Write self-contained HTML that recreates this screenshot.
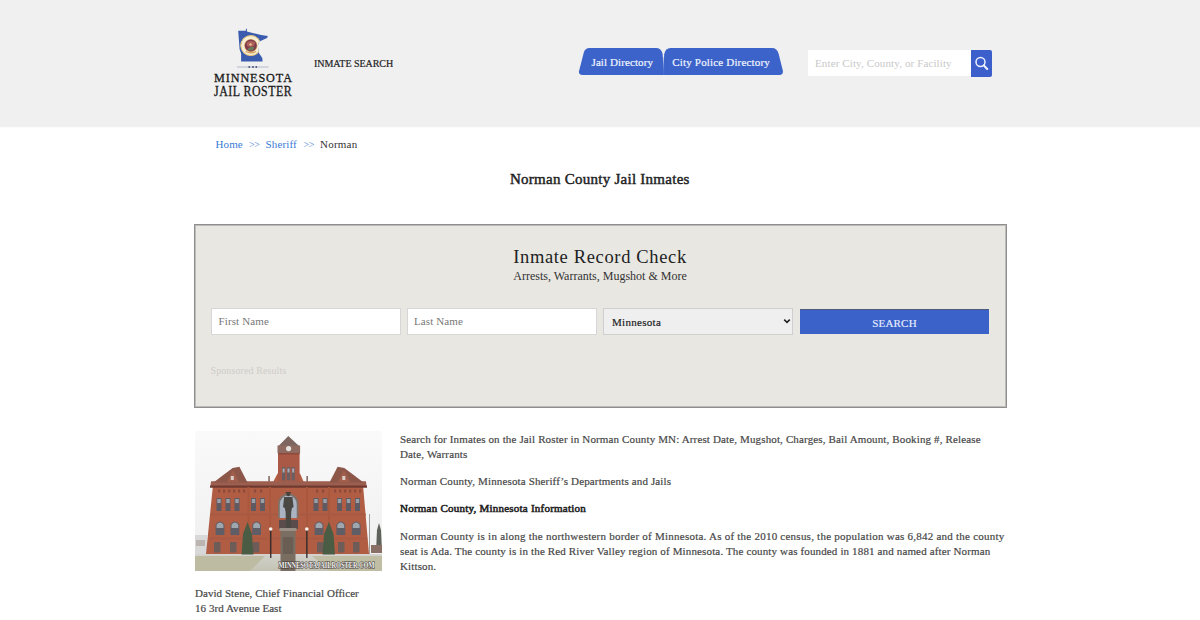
<!DOCTYPE html>
<html><head><meta charset="utf-8">
<style>
*{box-sizing:border-box;margin:0;padding:0}
html,body{width:1200px;height:620px;overflow:hidden;background:#fff;font-family:"Liberation Serif",serif;color:#444}
.a{position:absolute;white-space:nowrap}
#hdr{position:absolute;left:0;top:0;width:1200px;height:128px;background:linear-gradient(to bottom,#f0f0f0 0,#f0f0f0 125px,#ededed 125px,#ededed 126px,#f3f3f3 126px,#f3f3f3 127px,#fbfbfb 127px)}
.tab{position:absolute;top:48px;height:27px}
.tabtxt{color:#f0f4ff;font-size:11px;line-height:11px;letter-spacing:0.1px;-webkit-text-stroke:0.2px #f0f4ff}
#box{position:absolute;left:194px;top:224px;width:813px;height:184px;background:#e8e7e2;border:1px solid #8e8e8e;box-shadow:inset 0 0 0 1px #bdbcb8}
.inp{position:absolute;top:308px;height:27px;width:190px;background:#fff;border:1px solid #d6d6d6}
.ph{font-size:11px;line-height:11px;color:#777;letter-spacing:0.12px}
.p{font-size:11px;line-height:15px;color:#474747;letter-spacing:0.14px;-webkit-text-stroke:0.2px #474747}
</style></head><body>
<div id="hdr"></div>

<!-- logo -->
<svg class="a" style="left:230px;top:24px" width="46" height="46" viewBox="230 24 46 46">
  <defs>
    <clipPath id="mn"><path d="M238.2,30.7 L245.9,30.7 L245.9,28.8 L246.9,28.8 L246.9,31.4 L253.7,33.3 L261.2,35.1 L267.8,35.9 L267.1,38.1 L258.9,41.8 L257.8,46.3 L258.9,52.9 L262.3,58.1 L262.6,61.5 L241.1,61.5 L241.1,53.7 L239.6,49.2 Z"/></clipPath>
  </defs>
  <path d="M238.2,30.7 L245.9,30.7 L245.9,28.8 L246.9,28.8 L246.9,31.4 L253.7,33.3 L261.2,35.1 L267.8,35.9 L267.1,38.1 L258.9,41.8 L257.8,46.3 L258.9,52.9 L262.3,58.1 L262.6,61.5 L241.1,61.5 L241.1,53.7 L239.6,49.2 Z" fill="#3b5cae"/>
  <g clip-path="url(#mn)">
    <circle cx="250.8" cy="45.6" r="10.3" fill="#f6eed6"/>
    <circle cx="250.8" cy="45.6" r="10" fill="none" stroke="#dcb862" stroke-width="0.9"/>
    <circle cx="250.8" cy="45.6" r="6.6" fill="#d8b06a"/>
    <circle cx="250.8" cy="45.6" r="6" fill="#7e3c4c"/>
    <path d="M246.5,43 Q250,39.5 255,42.5 L254,46 Q250,47.5 247,46 Z" fill="#b0605a"/>
    <path d="M248,48.5 Q251,45.5 254.5,47.5 L253,50 Q250,51 248,50 Z" fill="#6a7a5a"/>
    <circle cx="250.5" cy="44.5" r="1.3" fill="#e0c090"/>
    <path d="M245.5,51.5 Q251,54 256,51.5" stroke="#d8a060" stroke-width="1.3" fill="none"/>
  </g>
  <line x1="237" y1="67" x2="268.6" y2="67" stroke="#8f97b5" stroke-width="0.6"/>
  <rect x="248.5" y="66.2" width="1.6" height="1.6" fill="#3a4470"/>
  <rect x="252.2" y="66.2" width="1.6" height="1.6" fill="#3a4470"/>
  <rect x="255.5" y="66.2" width="1.6" height="1.6" fill="#3a4470"/>
</svg>
<div class="a" style="left:214px;top:72px;font-size:12.2px;line-height:12px;color:#1a1a1a;letter-spacing:0.9px;-webkit-text-stroke:0.3px #1a1a1a">MINNESOTA</div>
<div class="a" style="left:214px;top:84.5px;font-size:14px;line-height:14px;color:#1a1a1a;letter-spacing:0.6px;-webkit-text-stroke:0.3px #1a1a1a;transform:scaleX(0.85);transform-origin:0 0">JAIL ROSTER</div>

<div class="a" style="left:314px;top:58.1px;font-size:10px;line-height:12px;color:#222;letter-spacing:-0.05px;-webkit-text-stroke:0.2px #222">INMATE SEARCH</div>

<!-- tabs -->
<svg class="a" style="left:570px;top:40px" width="230" height="45" viewBox="570 40 230 45">
  <path d="M582.8,75 Q578.3,75 579,71.3 L583.8,52.5 Q585,48 589.5,48 L656,48 Q661.2,48 662.6,53.8 L664.2,75 Z" fill="#3c63c9"/>
  <path d="M663,75 L664.2,54.2 Q665.6,48 670.5,48 L772,48 Q777,48 778.6,53.8 L782.8,70.5 Q783.6,75 779.5,75 Z" fill="#3c63c9"/>
  <line x1="663.6" y1="57" x2="663.8" y2="75" stroke="#6f8ed8" stroke-width="0.6" opacity="0.6"/>
</svg>
<div class="a tabtxt" style="left:591.5px;top:56.8px">Jail Directory</div>
<div class="a tabtxt" style="left:672.3px;top:56.8px;letter-spacing:0.17px">City Police Directory</div>

<!-- search -->
<div class="a" style="left:808px;top:50px;width:164px;height:26px;background:#fff"></div>
<div class="a ph" style="left:815px;top:57.5px;color:#c8c8c8">Enter City, County, or Facility</div>
<div class="a" style="left:971px;top:50px;width:21px;height:27px;background:#3c5fcb;border-radius:0 2px 2px 0"></div>
<svg class="a" style="left:971px;top:50px" width="21" height="27" viewBox="971 50 21 27">
  <circle cx="980.5" cy="62" r="4.5" fill="none" stroke="#eef2ff" stroke-width="1.5"/>
  <line x1="983.8" y1="65.4" x2="987.2" y2="69" stroke="#eef2ff" stroke-width="2.1" stroke-linecap="round"/>
</svg>

<!-- breadcrumb -->
<div class="a" style="left:215.5px;top:137px;font-size:11px;line-height:14px;letter-spacing:0.1px;color:#3a7bd5">Home</div>
<div class="a" style="left:249px;top:138px;font-size:10px;line-height:14px;letter-spacing:-0.4px;color:#4a7fd0">&gt;&gt;</div>
<div class="a" style="left:265.6px;top:137px;font-size:11px;line-height:14px;letter-spacing:0.14px;color:#3a7bd5">Sheriff</div>
<div class="a" style="left:303.4px;top:138px;font-size:10px;line-height:14px;letter-spacing:-0.4px;color:#4a7fd0">&gt;&gt;</div>
<div class="a" style="left:320px;top:137px;font-size:11px;line-height:14px;letter-spacing:0.23px;color:#333">Norman</div>

<div class="a" style="left:510px;top:170.2px;font-size:15px;line-height:18px;color:#222;letter-spacing:0.26px;-webkit-text-stroke:0.45px #222">Norman County Jail Inmates</div>

<!-- box -->
<div id="box"></div>
<div class="a" style="left:400px;top:246.1px;width:400px;text-align:center;font-size:18.5px;line-height:22px;color:#222;letter-spacing:0.65px">Inmate Record Check</div>
<div class="a" style="left:400px;top:268.7px;width:400px;text-align:center;font-size:12px;line-height:14px;color:#333;letter-spacing:0px">Arrests, Warrants, Mugshot &amp; More</div>

<div class="inp" style="left:211px"></div>
<div class="a ph" style="left:218.5px;top:316px">First Name</div>
<div class="inp" style="left:407px"></div>
<div class="a ph" style="left:414px;top:316px">Last Name</div>
<div class="inp" style="left:603px;background:#efefef;border-color:#cfcfcf"></div>
<div class="a ph" style="left:612px;top:317px;color:#222;letter-spacing:0.29px;-webkit-text-stroke:0.2px #222">Minnesota</div>
<svg class="a" style="left:783px;top:317px" width="8" height="8" viewBox="0 0 8 8"><path d="M1.2,2.6 L4,5.4 L6.8,2.6" fill="none" stroke="#222" stroke-width="1.5"/></svg>
<div class="a" style="left:799.5px;top:309px;width:189px;height:24.5px;background:#3a62c9;border-top:1px solid #4d5a7a"></div>
<div class="a" style="left:800px;top:317.5px;width:189px;text-align:center;font-size:11px;line-height:11px;color:#e8eeff;letter-spacing:0.2px;-webkit-text-stroke:0.15px #e8eeff">SEARCH</div>

<div class="a" style="left:210.5px;top:364.6px;font-size:10px;line-height:11px;color:#cfcdc9;letter-spacing:0.1px">Sponsored Results</div>

<!-- image -->
<svg class="a" style="left:195px;top:431px" width="187" height="140" viewBox="195 431 187 140">
<defs><linearGradient id="sky" x1="0" y1="0" x2="0" y2="1"><stop offset="0" stop-color="#fafafa"/><stop offset="1" stop-color="#eeeeee"/></linearGradient><linearGradient id="gnd" x1="0" y1="0" x2="0" y2="1"><stop offset="0" stop-color="#d2d2cc"/><stop offset="1" stop-color="#c4c3b4"/></linearGradient></defs>
<rect x="195" y="431" width="187" height="140" fill="url(#sky)"/>
<rect x="195" y="535" width="12" height="19" fill="#d8d8d8"/>
<rect x="196" y="540" width="9" height="6" fill="#bcb4b0"/>
<rect x="369" y="514" width="0.8" height="40" fill="#8a8a88"/>
<path d="M376,552 L377,530 L379,523 L381,530 L382,552 Z" fill="#5e625a"/>
<rect x="371" y="545" width="11" height="8" fill="#8a6f66"/>
<path d="M213,485 L363,485 L369,554 L206,554 Z" fill="#b05d43"/>
<path d="M271,486 L277.6,473.5 L300,473.5 L305.5,486 Z" fill="#b05d43"/>
<rect x="278" y="446" width="21.6" height="40" fill="#a95946"/>
<path d="M278,446.5 L288.3,436 L299.6,446.5 Z" fill="#7d6660"/>
<rect x="277.5" y="445.5" width="22.6" height="7.5" fill="#8e6a60"/>
<circle cx="288.6" cy="448.6" r="2.6" fill="#e6e2df"/>
<rect x="278" y="453" width="21.6" height="1.4" fill="#8d4a3a"/>
<rect x="282" y="467" width="3.2" height="13.5" fill="#6a5e62"/>
<rect x="282.6" y="468.5" width="2" height="4" fill="#a9aab2"/>
<rect x="286.9" y="467" width="3.2" height="13.5" fill="#6a5e62"/>
<rect x="287.5" y="468.5" width="2" height="4" fill="#a9aab2"/>
<rect x="291.6" y="467" width="3.2" height="13.5" fill="#6a5e62"/>
<rect x="292.20000000000005" y="468.5" width="2" height="4" fill="#a9aab2"/>
<rect x="268.4" y="476" width="1.3" height="6" fill="#6a4c44"/>
<rect x="306.5" y="476" width="1.3" height="6" fill="#6a4c44"/>
<path d="M211,481.2 L366,481.2 L366.5,486 L210.5,486 Z" fill="#9c5e4e"/>
<path d="M213.5,482.5 L222,476 L232.7,468 L239.4,466.8 L247.5,482.5 Z" fill="#8c5648"/>
<path d="M227,482 L233,470 L239,482 Z" fill="#a25e4c"/>
<rect x="230.8" y="476" width="3" height="4" fill="#d9cfc8"/>
<path d="M363.5,482.5 L355,476 L344.3,468 L337.6,466.8 L329.5,482.5 Z" fill="#8c5648"/>
<path d="M338,482 L344,470 L350,482 Z" fill="#a25e4c"/>
<rect x="342.3" y="476" width="3" height="4" fill="#d9cfc8"/>
<path d="M210,485.5 L367,485.5 L367,487.8 L210,487.8 Z" fill="#6f3a30"/>
<rect x="218" y="489.5" width="2.2" height="3" fill="#8c4a3a"/>
<rect x="223" y="489.5" width="2.2" height="3" fill="#8c4a3a"/>
<rect x="228" y="489.5" width="2.2" height="3" fill="#8c4a3a"/>
<rect x="233" y="489.5" width="2.2" height="3" fill="#8c4a3a"/>
<rect x="238" y="489.5" width="2.2" height="3" fill="#8c4a3a"/>
<rect x="243" y="489.5" width="2.2" height="3" fill="#8c4a3a"/>
<rect x="334" y="489.5" width="2.2" height="3" fill="#8c4a3a"/>
<rect x="339" y="489.5" width="2.2" height="3" fill="#8c4a3a"/>
<rect x="344" y="489.5" width="2.2" height="3" fill="#8c4a3a"/>
<rect x="349" y="489.5" width="2.2" height="3" fill="#8c4a3a"/>
<rect x="354" y="489.5" width="2.2" height="3" fill="#8c4a3a"/>
<rect x="359" y="489.5" width="2.2" height="3" fill="#8c4a3a"/>
<rect x="254" y="489.5" width="2.2" height="3" fill="#8c4a3a"/>
<rect x="260" y="489.5" width="2.2" height="3" fill="#8c4a3a"/>
<rect x="316" y="489.5" width="2.2" height="3" fill="#8c4a3a"/>
<rect x="322" y="489.5" width="2.2" height="3" fill="#8c4a3a"/>
<rect x="247.5" y="487" width="2" height="67" fill="#a9583d"/>
<rect x="269" y="487" width="2" height="67" fill="#a9583d"/>
<rect x="306" y="487" width="2" height="67" fill="#a9583d"/>
<rect x="328" y="487" width="2" height="67" fill="#a9583d"/>
<path d="M211,513.5 L365.5,513.5 L366,515.5 L210.8,515.5 Z" fill="#a85b42"/>
<path d="M209,537.5 L367,537.5 L367.3,539.5 L208.8,539.5 Z" fill="#a85b42"/>
<rect x="216.5" y="498" width="5" height="13" fill="#5f5a62"/>
<rect x="217.3" y="499" width="3.4" height="4" fill="#9aa0a8"/>
<rect x="225.5" y="498" width="5" height="13" fill="#5f5a62"/>
<rect x="226.3" y="499" width="3.4" height="4" fill="#9aa0a8"/>
<rect x="234.5" y="498" width="5" height="13" fill="#5f5a62"/>
<rect x="235.3" y="499" width="3.4" height="4" fill="#9aa0a8"/>
<rect x="251" y="498" width="5" height="13" fill="#5f5a62"/>
<rect x="251.8" y="499" width="3.4" height="4" fill="#9aa0a8"/>
<rect x="260" y="498" width="5" height="13" fill="#5f5a62"/>
<rect x="260.8" y="499" width="3.4" height="4" fill="#9aa0a8"/>
<rect x="313.5" y="498" width="5" height="13" fill="#5f5a62"/>
<rect x="314.3" y="499" width="3.4" height="4" fill="#9aa0a8"/>
<rect x="322.5" y="498" width="5" height="13" fill="#5f5a62"/>
<rect x="323.3" y="499" width="3.4" height="4" fill="#9aa0a8"/>
<rect x="337" y="498" width="5" height="13" fill="#5f5a62"/>
<rect x="337.8" y="499" width="3.4" height="4" fill="#9aa0a8"/>
<rect x="346" y="498" width="5" height="13" fill="#5f5a62"/>
<rect x="346.8" y="499" width="3.4" height="4" fill="#9aa0a8"/>
<rect x="355" y="498" width="5" height="13" fill="#5f5a62"/>
<rect x="355.8" y="499" width="3.4" height="4" fill="#9aa0a8"/>
<path d="M215.6,535 L215.6,524.5 Q220.0,518.5 224.4,524.5 L224.4,535 Z" fill="#5f5d66"/>
<path d="M216.6,528 L216.6,524.8 Q220.0,520 223.4,524.8 L223.4,528 Z" fill="#9fa6ae"/>
<path d="M230.5,535 L230.5,524.5 Q234.9,518.5 239.3,524.5 L239.3,535 Z" fill="#5f5d66"/>
<path d="M231.5,528 L231.5,524.8 Q234.9,520 238.3,524.8 L238.3,528 Z" fill="#9fa6ae"/>
<path d="M252.2,535 L252.2,524.5 Q256.59999999999997,518.5 261.0,524.5 L261.0,535 Z" fill="#5f5d66"/>
<path d="M253.2,528 L253.2,524.8 Q256.59999999999997,520 260.0,524.8 L260.0,528 Z" fill="#9fa6ae"/>
<path d="M314.6,535 L314.6,524.5 Q319.0,518.5 323.40000000000003,524.5 L323.40000000000003,535 Z" fill="#5f5d66"/>
<path d="M315.6,528 L315.6,524.8 Q319.0,520 322.40000000000003,524.8 L322.40000000000003,528 Z" fill="#9fa6ae"/>
<path d="M336.4,535 L336.4,524.5 Q340.79999999999995,518.5 345.2,524.5 L345.2,535 Z" fill="#5f5d66"/>
<path d="M337.4,528 L337.4,524.8 Q340.79999999999995,520 344.2,524.8 L344.2,528 Z" fill="#9fa6ae"/>
<path d="M351.8,535 L351.8,524.5 Q356.2,518.5 360.6,524.5 L360.6,535 Z" fill="#5f5d66"/>
<path d="M352.8,528 L352.8,524.8 Q356.2,520 359.6,524.8 L359.6,528 Z" fill="#9fa6ae"/>
<rect x="214" y="542" width="6.5" height="10.5" fill="#6d5c58"/>
<rect x="230" y="542" width="6.5" height="10.5" fill="#6d5c58"/>
<rect x="252.8" y="542" width="6.5" height="10.5" fill="#6d5c58"/>
<rect x="317" y="542" width="6.5" height="10.5" fill="#6d5c58"/>
<rect x="338" y="542" width="6.5" height="10.5" fill="#6d5c58"/>
<rect x="353" y="542" width="6.5" height="10.5" fill="#6d5c58"/>
<path d="M278,518 L278,503.5 A10,10 0 0 1 298.5,503.5 L298.5,518 Z" fill="#7f7068"/>
<path d="M279.8,518 L279.8,504 A8.4,8.6 0 0 1 296.7,504 L296.7,518 Z" fill="#a9b3c2"/>
<rect x="279" y="520" width="19" height="9" fill="#5a4c4c"/>
<rect x="195" y="554" width="187" height="17" fill="url(#gnd)"/>
<path d="M195,556 L265,556 L250,571 L195,571 Z" fill="#bdbca2"/>
<path d="M312,556 L382,556 L382,571 L330,571 Z" fill="#bfbda3"/>
<rect x="195" y="554" width="187" height="1.5" fill="#d4d2cf"/>
<path d="M241.5,554.5 L243,534 L247.5,522 L252,534 L253.5,554.5 Z" fill="#4a5c44"/>
<path d="M322.5,554.5 L324,534 L329,522 L333.5,534 L335,554.5 Z" fill="#4a5c44"/>
<rect x="270.09999999999997" y="530" width="1.3" height="28" fill="#2f2a2a"/>
<circle cx="270.7" cy="529" r="1.8" fill="#f4f2ee"/>
<rect x="306.2" y="530" width="1.3" height="28" fill="#2f2a2a"/>
<circle cx="306.8" cy="529" r="1.8" fill="#f4f2ee"/>
<circle cx="288.3" cy="494.3" r="1.9" fill="#45423e"/>
<rect x="285.6" y="492" width="5.4" height="1.2" fill="#45423e"/>
<path d="M284.2,497 L292.4,497 L293.6,507 L292,508 L291.2,512 L290.8,528 L286,528 L285.6,512 L284.8,508 L283,507 Z" fill="#4a4843"/>
<rect x="279.5" y="528" width="17" height="3" fill="#9a9088"/>
<rect x="280.5" y="531" width="15" height="40" fill="#7a6d62"/>
<rect x="282.8" y="537" width="10.4" height="17" fill="#6a5d53"/>
<text x="278.5" y="567.5" textLength="96" lengthAdjust="spacingAndGlyphs" font-family="Liberation Serif" font-weight="700" font-size="7.4" fill="#f4f4f4" stroke="#3e3834" stroke-width="1" paint-order="stroke">MINNESOTAJAILROSTER.COM</text>

</svg>

<!-- paragraphs -->
<div class="a p" style="left:400px;top:432px">Search for Inmates on the Jail Roster in Norman County MN: Arrest Date, Mugshot, Charges, Bail Amount, Booking #, Release</div>
<div class="a p" style="left:400px;top:447px">Date, Warrants</div>
<div class="a p" style="left:400px;top:474px">Norman County, Minnesota Sheriff’s Departments and Jails</div>
<div class="a p" style="left:400px;top:501px;color:#222;letter-spacing:0.23px;-webkit-text-stroke:0.55px #222">Norman County, Minnesota Information</div>
<div class="a p" style="left:400px;top:529px;letter-spacing:0.24px">Norman County is in along the northwestern border of Minnesota. As of the 2010 census, the population was 6,842 and the county</div>
<div class="a p" style="left:400px;top:544px">seat is Ada. The county is in the Red River Valley region of Minnesota. The county was founded in 1881 and named after Norman</div>
<div class="a p" style="left:400px;top:559px">Kittson.</div>

<div class="a p" style="left:195px;top:586px;letter-spacing:0.05px">David Stene, Chief Financial Officer</div>
<div class="a p" style="left:195px;top:601px;letter-spacing:0.05px">16 3rd Avenue East</div>
</body></html>
